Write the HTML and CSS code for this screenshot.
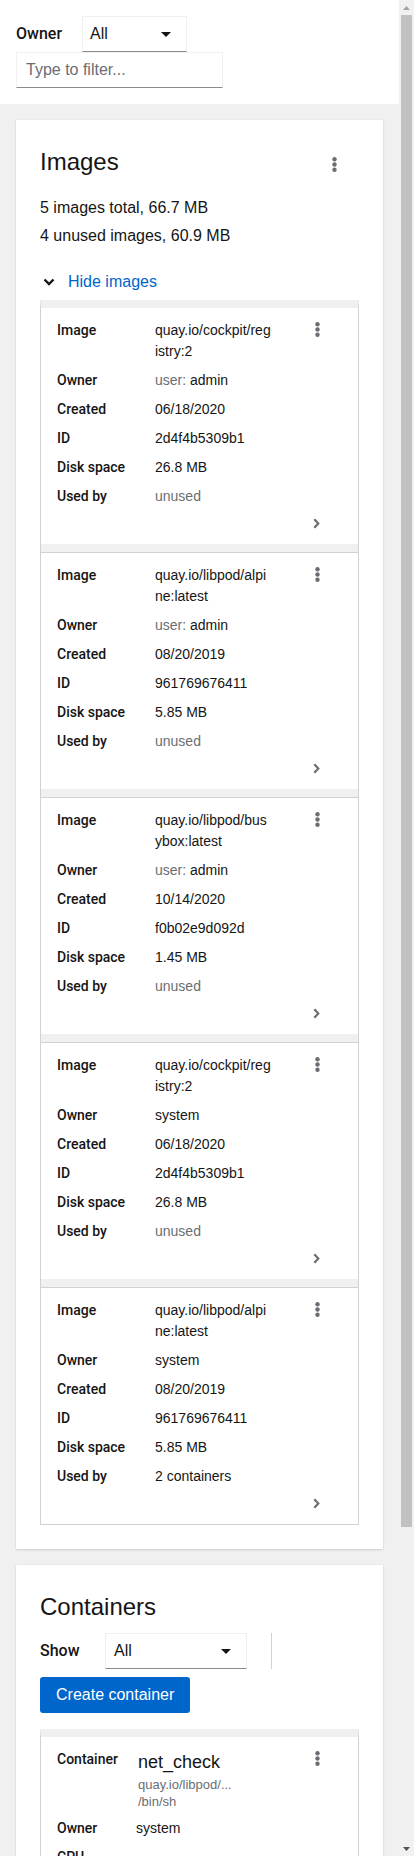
FILE: index.html
```html
<!DOCTYPE html>
<html lang="en">
<head>
<meta charset="utf-8">
<title>Podman containers</title>
<link rel="stylesheet" href="styles.css">
</head>
<body>
<div class="app">
  <div class="page">
    <section class="filters">
      <div class="owner-row">
        <span class="owner-label">Owner</span>
        <div class="select select-owner"><span>All</span><svg class="caret" viewBox="0 0 10 5" width="10" height="5"><path d="M0 0h10L5 5z" fill="#151515"/></svg></div>
      </div>
      <div class="filter-input"><span class="placeholder">Type to filter...</span></div>
    </section>

    <section class="card">
      <header class="card-header">
        <h2 class="card-title">Images</h2>
        <svg class="kebab kebab-card" viewBox="0 0 5 15" width="5" height="15"><circle cx="2.5" cy="2.3" r="2.2"/><circle cx="2.5" cy="7.5" r="2.2"/><circle cx="2.5" cy="12.7" r="2.2"/></svg>
      </header>
      <div class="summary">
        <div>5 images total, 66.7 MB</div>
        <div>4 unused images, 60.9 MB</div>
      </div>
      <div class="toggle">
        <svg class="angle-down" viewBox="0 0 12 8" width="12" height="8"><path d="M1.5 1.5l4.5 4.5 4.5-4.5" fill="none" stroke="#151515" stroke-width="2.4"/></svg>
        <span>Hide images</span>
      </div>
      <ul class="data-list">
        <li class="item">
          <div class="item-main">
            <dl class="fields">
              <dt>Image</dt><dd><span class="ln">quay.io/cockpit/reg</span><span class="ln">istry:2</span></dd>
              <dt>Owner</dt><dd><span class="muted">user:</span> admin</dd>
              <dt>Created</dt><dd>06/18/2020</dd>
              <dt>ID</dt><dd>2d4f4b5309b1</dd>
              <dt>Disk space</dt><dd>26.8 MB</dd>
              <dt>Used by</dt><dd class="muted">unused</dd>
            </dl>
            <svg class="kebab" viewBox="0 0 5 15" width="5" height="15"><circle cx="2.5" cy="2.3" r="2.2"/><circle cx="2.5" cy="7.5" r="2.2"/><circle cx="2.5" cy="12.7" r="2.2"/></svg>
          </div>
          <div class="item-foot"><svg class="angle-right" viewBox="0 0 7 11" width="7" height="11"><path d="M1.3 1.2l4 4.3-4 4.3" fill="none" stroke="#6a6e73" stroke-width="2.2"/></svg></div>
        </li>
        <li class="item">
          <div class="item-main">
            <dl class="fields">
              <dt>Image</dt><dd><span class="ln">quay.io/libpod/alpi</span><span class="ln">ne:latest</span></dd>
              <dt>Owner</dt><dd><span class="muted">user:</span> admin</dd>
              <dt>Created</dt><dd>08/20/2019</dd>
              <dt>ID</dt><dd>961769676411</dd>
              <dt>Disk space</dt><dd>5.85 MB</dd>
              <dt>Used by</dt><dd class="muted">unused</dd>
            </dl>
            <svg class="kebab" viewBox="0 0 5 15" width="5" height="15"><circle cx="2.5" cy="2.3" r="2.2"/><circle cx="2.5" cy="7.5" r="2.2"/><circle cx="2.5" cy="12.7" r="2.2"/></svg>
          </div>
          <div class="item-foot"><svg class="angle-right" viewBox="0 0 7 11" width="7" height="11"><path d="M1.3 1.2l4 4.3-4 4.3" fill="none" stroke="#6a6e73" stroke-width="2.2"/></svg></div>
        </li>
        <li class="item">
          <div class="item-main">
            <dl class="fields">
              <dt>Image</dt><dd><span class="ln">quay.io/libpod/bus</span><span class="ln">ybox:latest</span></dd>
              <dt>Owner</dt><dd><span class="muted">user:</span> admin</dd>
              <dt>Created</dt><dd>10/14/2020</dd>
              <dt>ID</dt><dd>f0b02e9d092d</dd>
              <dt>Disk space</dt><dd>1.45 MB</dd>
              <dt>Used by</dt><dd class="muted">unused</dd>
            </dl>
            <svg class="kebab" viewBox="0 0 5 15" width="5" height="15"><circle cx="2.5" cy="2.3" r="2.2"/><circle cx="2.5" cy="7.5" r="2.2"/><circle cx="2.5" cy="12.7" r="2.2"/></svg>
          </div>
          <div class="item-foot"><svg class="angle-right" viewBox="0 0 7 11" width="7" height="11"><path d="M1.3 1.2l4 4.3-4 4.3" fill="none" stroke="#6a6e73" stroke-width="2.2"/></svg></div>
        </li>
        <li class="item">
          <div class="item-main">
            <dl class="fields">
              <dt>Image</dt><dd><span class="ln">quay.io/cockpit/reg</span><span class="ln">istry:2</span></dd>
              <dt>Owner</dt><dd>system</dd>
              <dt>Created</dt><dd>06/18/2020</dd>
              <dt>ID</dt><dd>2d4f4b5309b1</dd>
              <dt>Disk space</dt><dd>26.8 MB</dd>
              <dt>Used by</dt><dd class="muted">unused</dd>
            </dl>
            <svg class="kebab" viewBox="0 0 5 15" width="5" height="15"><circle cx="2.5" cy="2.3" r="2.2"/><circle cx="2.5" cy="7.5" r="2.2"/><circle cx="2.5" cy="12.7" r="2.2"/></svg>
          </div>
          <div class="item-foot"><svg class="angle-right" viewBox="0 0 7 11" width="7" height="11"><path d="M1.3 1.2l4 4.3-4 4.3" fill="none" stroke="#6a6e73" stroke-width="2.2"/></svg></div>
        </li>
        <li class="item">
          <div class="item-main">
            <dl class="fields">
              <dt>Image</dt><dd><span class="ln">quay.io/libpod/alpi</span><span class="ln">ne:latest</span></dd>
              <dt>Owner</dt><dd>system</dd>
              <dt>Created</dt><dd>08/20/2019</dd>
              <dt>ID</dt><dd>961769676411</dd>
              <dt>Disk space</dt><dd>5.85 MB</dd>
              <dt>Used by</dt><dd>2 containers</dd>
            </dl>
            <svg class="kebab" viewBox="0 0 5 15" width="5" height="15"><circle cx="2.5" cy="2.3" r="2.2"/><circle cx="2.5" cy="7.5" r="2.2"/><circle cx="2.5" cy="12.7" r="2.2"/></svg>
          </div>
          <div class="item-foot"><svg class="angle-right" viewBox="0 0 7 11" width="7" height="11"><path d="M1.3 1.2l4 4.3-4 4.3" fill="none" stroke="#6a6e73" stroke-width="2.2"/></svg></div>
        </li>
      </ul>
    </section>

    <section class="card">
      <header class="card-header">
        <h2 class="card-title">Containers</h2>
      </header>
      <div class="toolbar">
        <span class="show-label">Show</span>
        <div class="select select-show"><span>All</span><svg class="caret" viewBox="0 0 10 5" width="10" height="5"><path d="M0 0h10L5 5z" fill="#151515"/></svg></div>
        <span class="separator"></span>
      </div>
      <button class="btn-primary" type="button">Create container</button>
      <ul class="data-list containers">
        <li class="item">
          <div class="item-main">
            <dl class="fields fields-container">
              <dt>Container</dt>
              <dd>
                <span class="c-name">net_check</span>
                <span class="c-sub">quay.io/libpod/...</span>
                <span class="c-sub">/bin/sh</span>
              </dd>
              <dt>Owner</dt><dd>system</dd>
              <dt>CPU</dt><dd></dd>
              <dt>Memory</dt><dd></dd>
              <dt>State</dt><dd></dd>
            </dl>
            <svg class="kebab" viewBox="0 0 5 15" width="5" height="15"><circle cx="2.5" cy="2.3" r="2.2"/><circle cx="2.5" cy="7.5" r="2.2"/><circle cx="2.5" cy="12.7" r="2.2"/></svg>
          </div>
        </li>
      </ul>
    </section>
  </div>
</div>
<div class="scrollbar" aria-hidden="true">
  <div class="sb-btn"><svg viewBox="0 0 7 4" width="7" height="4"><path d="M0 4L3.5 0 7 4z" fill="#a3a3a3"/></svg></div>
  <div class="sb-track"><div class="sb-thumb"></div></div>
  <div class="sb-btn"><svg viewBox="0 0 7 4" width="7" height="4"><path d="M0 0h7L3.5 4z" fill="#505050"/></svg></div>
</div>
</body>
</html>
```
FILE: styles.css
```css
* { box-sizing: border-box; }

html, body {
  margin: 0;
  height: 100%;
  overflow: hidden;
}

body {
  font-family: "Liberation Sans", Arial, sans-serif;
  color: #151515;
  font-size: 16px;
  display: flex;
}

.app {
  flex: 1;
  min-width: 0;
  height: 100vh;
  overflow: hidden;
  background: #f0f0f0;
}

.page {
  padding-bottom: 16px;
}

/* fake window scrollbar */
.scrollbar {
  flex: none;
  width: 15px;
  height: 100vh;
  background: #f1f1f1;
  display: flex;
  flex-direction: column;
}

.sb-btn {
  height: 15px;
  flex: none;
  display: flex;
  align-items: center;
  justify-content: center;
}

.sb-btn svg { display: block; }

.sb-track {
  flex: 1;
  padding: 0 2px;
}

.sb-thumb {
  height: 1512px;
  background: #c1c1c1;
}

/* medium-weight labels */
.owner-label,
.show-label,
.fields dt {
  font-family: Roboto, "Liberation Sans", Arial, sans-serif;
  font-weight: 500;
}

/* top filter bar */
.filters {
  background: #fff;
  padding: 16px;
}

.owner-row {
  display: flex;
  align-items: center;
}

.owner-label {
  width: 66px;
  line-height: 24px;
}

.select {
  height: 36px;
  display: flex;
  align-items: center;
  justify-content: space-between;
  background: #fff;
  border: 1px solid #f0f0f0;
  border-bottom-color: #8a8d90;
  padding: 0 15px 0 7px;
  font-size: 16px;
}

.select-owner { width: 105px; }
.select-show { width: 142px; padding-left: 8px; }

.caret { display: block; }

.filter-input {
  width: 207px;
  height: 36px;
  border: 1px solid #f0f0f0;
  border-bottom-color: #8a8d90;
  padding: 0 9px;
  display: flex;
  align-items: center;
}

.placeholder { color: #6a6e73; }

/* cards */
.card {
  background: #fff;
  margin: 16px 16px 0;
  padding: 24px;
  box-shadow: 0 1px 2px 0 rgba(3, 3, 3, 0.12), 0 0 2px 0 rgba(3, 3, 3, 0.06);
}

.card-header {
  display: flex;
  align-items: center;
  justify-content: space-between;
  height: 36px;
}

.card-title {
  margin: 0;
  font-size: 24px;
  font-weight: 400;
  line-height: 36px;
}

.kebab { display: block; fill: #6a6e73; flex: none; }
.kebab-card { margin-right: 22px; margin-top: 4px; }

.summary {
  margin-top: 16px;
  display: flex;
  flex-direction: column;
  gap: 4px;
  line-height: 24px;
}

.toggle {
  margin-top: 16px;
  padding: 6px 0;
  display: flex;
  align-items: center;
  line-height: 24px;
  color: #06c;
}

.angle-down { display: block; margin-left: 3px; margin-right: 13px; }

/* data list */
.data-list {
  list-style: none;
  margin: 0;
  padding: 0;
  border-top: 8px solid #f0f0f0;
  border-left: 1px solid #d2d2d2;
  border-right: 1px solid #d2d2d2;
  border-bottom: 1px solid #d2d2d2;
}

.item {
  padding: 12px 38px 12px 16px;
}

.item + .item { border-top: 1px solid #d2d2d2; }
.item:not(:last-child) { border-bottom: 8px solid #f0f0f0; }

.item-main {
  display: flex;
  align-items: flex-start;
}

.item-main .kebab { margin-top: 2px; }

.fields {
  flex: 1;
  margin: 0;
  display: grid;
  grid-template-columns: 98px 1fr;
  row-gap: 8px;
  font-size: 14px;
  line-height: 21px;
}

.fields dd { margin: 0; }

.ln { display: block; }
.muted { color: #6a6e73; }

.item-foot {
  margin-top: 8px;
  height: 17px;
  display: flex;
  align-items: center;
  justify-content: flex-end;
}

.angle-right { display: block; }

/* containers */
.toolbar {
  margin-top: 8px;
  display: flex;
  align-items: center;
}

.show-label {
  width: 65px;
  line-height: 24px;
}

.separator {
  width: 1px;
  height: 36px;
  background: #d2d2d2;
  margin-left: 24px;
}

.btn-primary {
  margin-top: 8px;
  height: 36px;
  padding: 0 16px;
  background: #06c;
  color: #fff;
  border: 0;
  border-radius: 3px;
  font-family: inherit;
  font-size: 16px;
  display: block;
}

.containers { margin-top: 16px; }

.fields-container { grid-template-columns: 79px 1fr; }

.c-name {
  display: block;
  font-size: 18px;
  line-height: 27px;
  margin-left: 2px;
}

.c-sub {
  display: block;
  font-size: 13px;
  line-height: 17px;
  color: #6a6e73;
  margin-left: 2px;
}
```
